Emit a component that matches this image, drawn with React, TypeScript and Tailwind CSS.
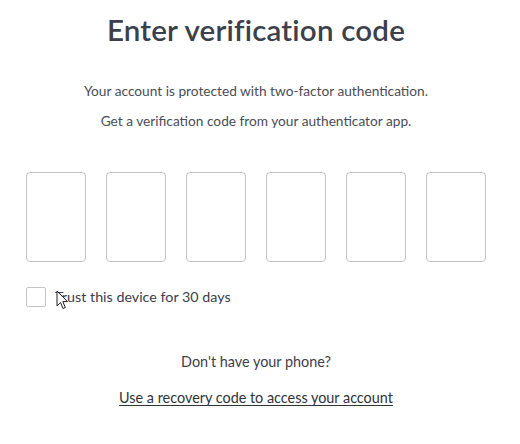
export default function App() {
  const boxes = [0, 1, 2, 3, 4, 5];
  return (
    <div
      className="w-[520px] h-[444px] bg-white pl-[26px] pt-[12px]"
      style={{ fontFamily: "Lato, 'Liberation Sans', sans-serif" }}
    >
      <div className="w-[460px] flex flex-col items-center">
        <h1 className="text-[29.5px] leading-[36px] font-semibold text-[#3b404b] tracking-[0.2px]">
          Enter verification code
        </h1>
        <p className="mt-[35px] text-[13.7px] leading-[16px] text-[#4a4e55]">
          Your account is protected with two-factor authentication.
        </p>
        <p className="mt-[14px] text-[13.7px] leading-[16px] text-[#4a4e55]">
          Get a verification code from your authenticator app.
        </p>

        <div className="mt-[43px] w-full flex justify-between">
          {boxes.map((i) => (
            <div
              key={i}
              className="w-[60px] h-[90px] rounded-[4px] border border-[#c4c4c4] bg-white"
            />
          ))}
        </div>

        <div className="mt-[25px] w-full flex items-center relative">
          <div className="w-[20px] h-[20px] border border-[#c4c4c4] rounded-[2px] bg-white" />
          <span className="ml-[9px] text-[14.3px] leading-[20px] text-[#3b404b]">
            Trust this device for 30 days
          </span>
          <svg
            className="absolute left-[30px] top-[3px]"
            width="13"
            height="21"
            viewBox="0 0 13 21"
          >
            <path
              d="M1 1 L1 16 L4.5 12.5 L7 18.5 L9.3 17.5 L6.8 11.6 L11.5 11.6 Z"
              fill="white"
              stroke="#222"
              strokeWidth="1"
              strokeLinejoin="round"
            />
          </svg>
        </div>

        <p className="mt-[46px] text-[14.4px] leading-[17px] text-[#3b404b]">
          Don't have your phone?
        </p>
        <a
          href="#"
          className="mt-[19px] text-[14.4px] leading-[17px] text-[#2f333a] underline underline-offset-2"
        >
          Use a recovery code to access your account
        </a>
      </div>
    </div>
  );
}
